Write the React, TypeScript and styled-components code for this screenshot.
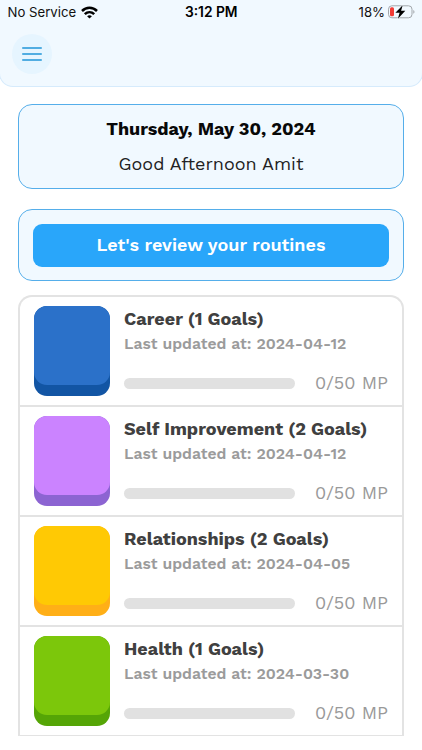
import React from "react";
import styled, { createGlobalStyle } from "styled-components";

const GlobalStyle = createGlobalStyle`
  * { box-sizing: border-box; }
  body { margin: 0; background: #fff; font-family: "Work Sans", Inter, sans-serif; overflow: hidden; }
`;

const Screen = styled.div`
  width: 422px;
  height: 750px;
  overflow: hidden;
  background: #fff;
`;

const Header = styled.header`
  height: 87px;
  margin: 0 -1px;
  background: #f1f9ff;
  border: 1px solid #d6ebfc;
  border-top: 0;
  border-radius: 0 0 14px 14px;
`;

const StatusBar = styled.div`
  height: 24px;
  display: grid;
  grid-template-columns: 1fr auto 1fr;
  align-items: center;
  padding: 0 7px 0 7.5px;
  color: #111;
  font: 400 13.2px/24px Inter, sans-serif;
`;

const StatusGroup = styled.div<{ $end?: boolean }>`
  display: flex;
  align-items: center;
  gap: ${(p) => (p.$end ? 3 : 5)}px;
  justify-content: ${(p) => (p.$end ? "flex-end" : "flex-start")};
  svg { display: block; }
`;

const Clock = styled.div`
  font-size: 13.8px;
  font-weight: 600;
  color: #000;
`;

const MenuButton = styled.button`
  display: flex;
  align-items: center;
  justify-content: center;
  width: 40px;
  height: 40px;
  margin: 10px 0 0 12px;
  padding: 0;
  border: 0;
  border-radius: 50%;
  background: #e6f5ff;
`;

const Content = styled.main`
  padding: 17px 18px 0;
`;

const Panel = styled.section`
  border: 1.5px solid #55aeea;
  border-radius: 14px;
  background: #f1f9ff;
`;

const Greeting = styled(Panel)`
  height: 85px;
  display: flex;
  flex-direction: column;
  align-items: center;
  padding-top: 12px;
`;

const RoutinePanel = styled(Panel)`
  height: 72px;
  margin-top: 20px;
  padding: 14px;
`;

const Label = styled.div<{
  $size: number;
  $weight: number;
  $color: string;
  $line: number;
}>`
  font-size: ${(p) => p.$size}px;
  font-weight: ${(p) => p.$weight};
  color: ${(p) => p.$color};
  line-height: ${(p) => p.$line}px;
  white-space: nowrap;
`;

const ReviewButton = styled.button`
  display: flex;
  align-items: center;
  justify-content: center;
  width: 100%;
  height: 42.5px;
  padding: 0;
  border: 0;
  border-radius: 9px;
  background: #29a6fa;
  font-family: inherit;
`;

const GoalList = styled.section`
  height: 441px;
  margin-top: 14px;
  overflow: hidden;
  border: 2px solid #e3e3e3;
  border-bottom: 0;
  border-radius: 14px 14px 0 0;
`;

const GoalRow = styled.article`
  display: flex;
  gap: 13.6px;
  height: 110px;
  padding: 9px 14px 0;
  border-bottom: 2px solid #e3e3e3;
`;

const Tile = styled.div<{ $base: string }>`
  flex: none;
  width: 76.4px;
  height: 90px;
  border-radius: 13px;
  background: ${(p) => p.$base};
`;

const TileFace = styled.div<{ $face: string }>`
  height: 79px;
  border-radius: 13px;
  background: ${(p) => p.$face};
`;

const GoalInfo = styled.div`
  flex: 1;
  min-width: 0;
  padding-top: 1px;
`;

const ProgressLine = styled.div`
  display: flex;
  align-items: center;
  justify-content: space-between;
  margin-top: 16px;
`;

const Track = styled.div`
  width: 171px;
  height: 11px;
  border-radius: 6px;
  background: #e1e1e1;
`;

const goals = [
  { title: "Career (1 Goals)", date: "2024-04-12", face: "#2b71c9", base: "#1255a4" },
  { title: "Self Improvement (2 Goals)", date: "2024-04-12", face: "#cb83ff", base: "#8c64d2" },
  { title: "Relationships (2 Goals)", date: "2024-04-05", face: "#ffc904", base: "#ffaf17" },
  { title: "Health (1 Goals)", date: "2024-03-30", face: "#7cc70b", base: "#55a506" },
];

function WifiIcon() {
  return (
    <svg width="17" height="13" viewBox="0 0 17 13" fill="none" stroke="#000" strokeWidth="2.5">
      <path d="M1 5C5.2.8 11.8.8 16 5" />
      <path d="M3.8 8.2c2.7-2.6 6.7-2.6 9.4 0" />
      <path d="M8.5 12.6 6.1 10.2c1.4-1.2 3.4-1.2 4.8 0z" fill="#000" stroke="none" />
    </svg>
  );
}

function BatteryIcon() {
  return (
    <svg width="27" height="14" viewBox="0 0 27 14">
      <rect x=".5" y=".8" width="23.5" height="12" rx="3.4" fill="none" stroke="#a2a7ab" />
      <rect x="2" y="2.3" width="4" height="9" rx="1.5" fill="#f23b35" />
      <path d="M25.3 4.9c1.6.6 1.6 3.2 0 3.8z" fill="#a2a7ab" />
      <path
        d="M14.7.2 7.4 7.8h4.2L9.9 13.8l7.4-8h-4.2z"
        fill="#000"
        stroke="#f1f9ff"
        strokeWidth="1"
        paintOrder="stroke"
      />
    </svg>
  );
}

function MenuIcon() {
  return (
    <svg width="20" height="16" viewBox="0 0 20 16" stroke="#51ade2" strokeWidth="1.8" strokeLinecap="round">
      <path d="M.9 2h18.2M.9 8h18.2M.9 14h18.2" />
    </svg>
  );
}

export default function App() {
  return (
    <>
      <GlobalStyle />
      <Screen>
        <Header>
          <StatusBar>
            <StatusGroup>
              <span>No Service</span>
              <WifiIcon />
            </StatusGroup>
            <Clock>3:12 PM</Clock>
            <StatusGroup $end>
              <span>18%</span>
              <BatteryIcon />
            </StatusGroup>
          </StatusBar>
          <MenuButton aria-label="Menu">
            <MenuIcon />
          </MenuButton>
        </Header>
        <Content>
          <Greeting>
            <Label $size={18} $weight={700} $color="#080808" $line={24}>
              Thursday, May 30, 2024
            </Label>
            <Label $size={18} $weight={400} $color="#222" $line={46}>
              Good Afternoon Amit
            </Label>
          </Greeting>
          <RoutinePanel>
            <ReviewButton>
              <Label $size={18} $weight={600} $color="#fff" $line={24}>
                Let's review your routines
              </Label>
            </ReviewButton>
          </RoutinePanel>
          <GoalList>
            {goals.map((g) => (
              <GoalRow key={g.title}>
                <Tile $base={g.base}>
                  <TileFace $face={g.face} />
                </Tile>
                <GoalInfo>
                  <Label $size={18} $weight={700} $color="#404040" $line={24}>
                    {g.title}
                  </Label>
                  <Label $size={15.75} $weight={600} $color="#9b9b9b" $line={25}>
                    Last updated at: {g.date}
                  </Label>
                  <ProgressLine>
                    <Track />
                    <Label $size={18} $weight={400} $color="#999" $line={22}>
                      0/50 MP
                    </Label>
                  </ProgressLine>
                </GoalInfo>
              </GoalRow>
            ))}
          </GoalList>
        </Content>
      </Screen>
    </>
  );
}
